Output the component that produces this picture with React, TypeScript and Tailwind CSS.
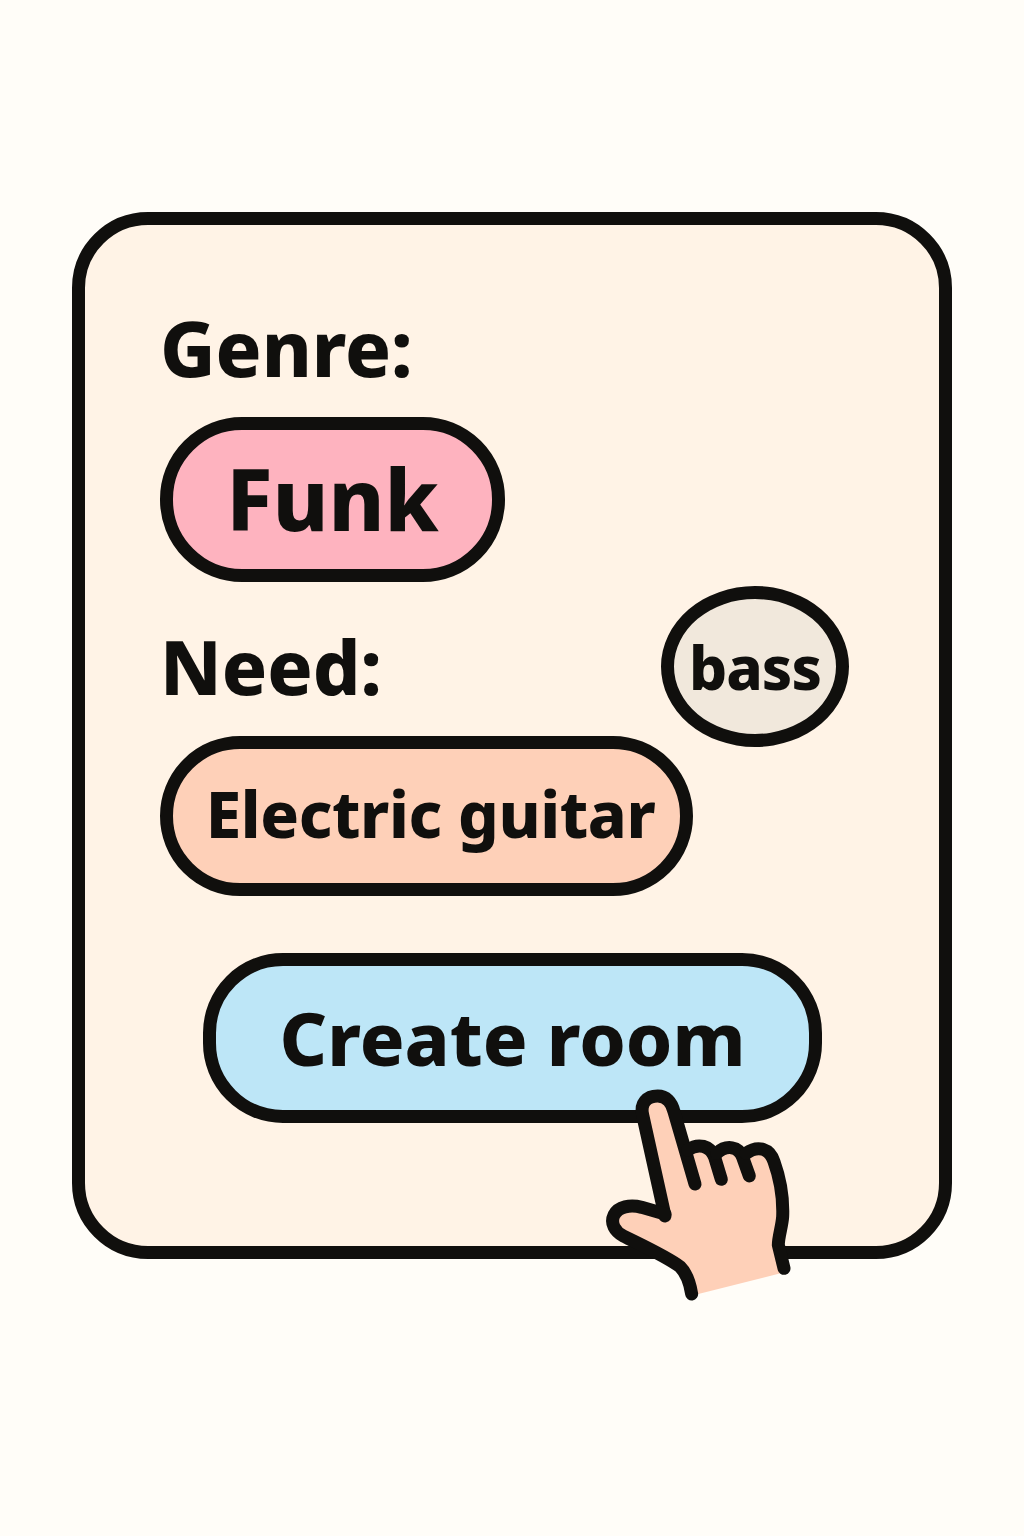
const labelText = "font-['Noto_Sans',sans-serif] font-extrabold text-[#100f0d] leading-none";

function Pointer() {
  // hand cursor, drawn in 3x coordinates of its 220x240 box
  return (
    <svg
      viewBox="0 0 660 720"
      className="absolute left-[505px] top-[845px] w-[220px] h-[240px]"
      fill="none"
      aria-hidden="true"
    >
      <path
        d="M158 125 C150 90 180 78 203 78 C228 78 245 95 252 125 L282 240 C310 222 345 222 368 258 C390 232 435 232 460 260 C480 232 525 232 545 270 C565 320 578 390 578 440 C578 470 565 500 565 520 L572 610 L325 672 C310 640 290 610 270 590 C240 565 160 525 100 495 C70 480 60 450 75 430 C90 410 125 405 155 412 L225 432 Z"
        fill="#fed0b8"
      />
      <g stroke="#100f0d" strokeWidth="39" strokeLinecap="round" strokeLinejoin="round">
        <path d="M225 438 L158 135 C150 100 170 78 203 78 C228 78 245 95 252 125 L315 342" />
        <path d="M293 240 C325 218 360 226 374 262 L394 328" />
        <path d="M380 250 C410 222 447 230 458 262 L478 318" />
        <path d="M468 250 C505 224 540 236 552 275 C570 325 580 390 578 440 C576 470 565 500 565 525 L582 595" />
        <path d="M225 432 L155 412 C120 403 85 410 72 435 C60 460 75 485 100 498 C160 528 230 560 270 590 C290 610 300 640 305 672" />
      </g>
    </svg>
  );
}

export default function App() {
  return (
    <div className="min-h-[1536px] bg-[#fffdf8] pt-[212px] pl-[72px]">
      <div className="relative w-[880px] h-[1047px] rounded-[76px] border-[13px] border-[#100f0d] bg-[#fff3e6] pt-[78px] pl-[75px] pr-[90px]">
        <h2 className={`${labelText} text-[76px] h-[90px] flex items-center`}>Genre:</h2>
        <div className="mt-[24px] w-[345px] h-[165px] rounded-[82px] border-[13px] border-[#100f0d] bg-[#feb3bf] flex items-center justify-center">
          <span className={`${labelText} text-[85px] -mt-[2px]`}>Funk</span>
        </div>

        <div className="flex items-center justify-between mt-[4px] -mb-[11px]">
          <h2 className={`${labelText} text-[75px]`}>Need:</h2>
          <div className="w-[188px] h-[161px] rounded-[50%] border-[13px] border-[#100f0d] bg-[#f1e8dc] flex items-center justify-center">
            <span className={`${labelText} text-[60px] tracking-[-1px]`}>bass</span>
          </div>
        </div>

        <div className="w-[533px] h-[160px] rounded-[80px] border-[13px] border-[#100f0d] bg-[#fed0b8] flex items-center justify-center">
          <span className={`${labelText} text-[64px] tracking-[-0.4px] whitespace-nowrap -mt-[4px] ml-[8px]`}>Electric guitar</span>
        </div>

        <div className="mt-[57px] ml-[43px] w-[619px] h-[170px] rounded-[80px] border-[13px] border-[#100f0d] bg-[#bde6f7] flex items-center justify-center">
          <span className={`${labelText} text-[74px] whitespace-nowrap`}>Create room</span>
        </div>

        <Pointer />
      </div>
    </div>
  );
}
